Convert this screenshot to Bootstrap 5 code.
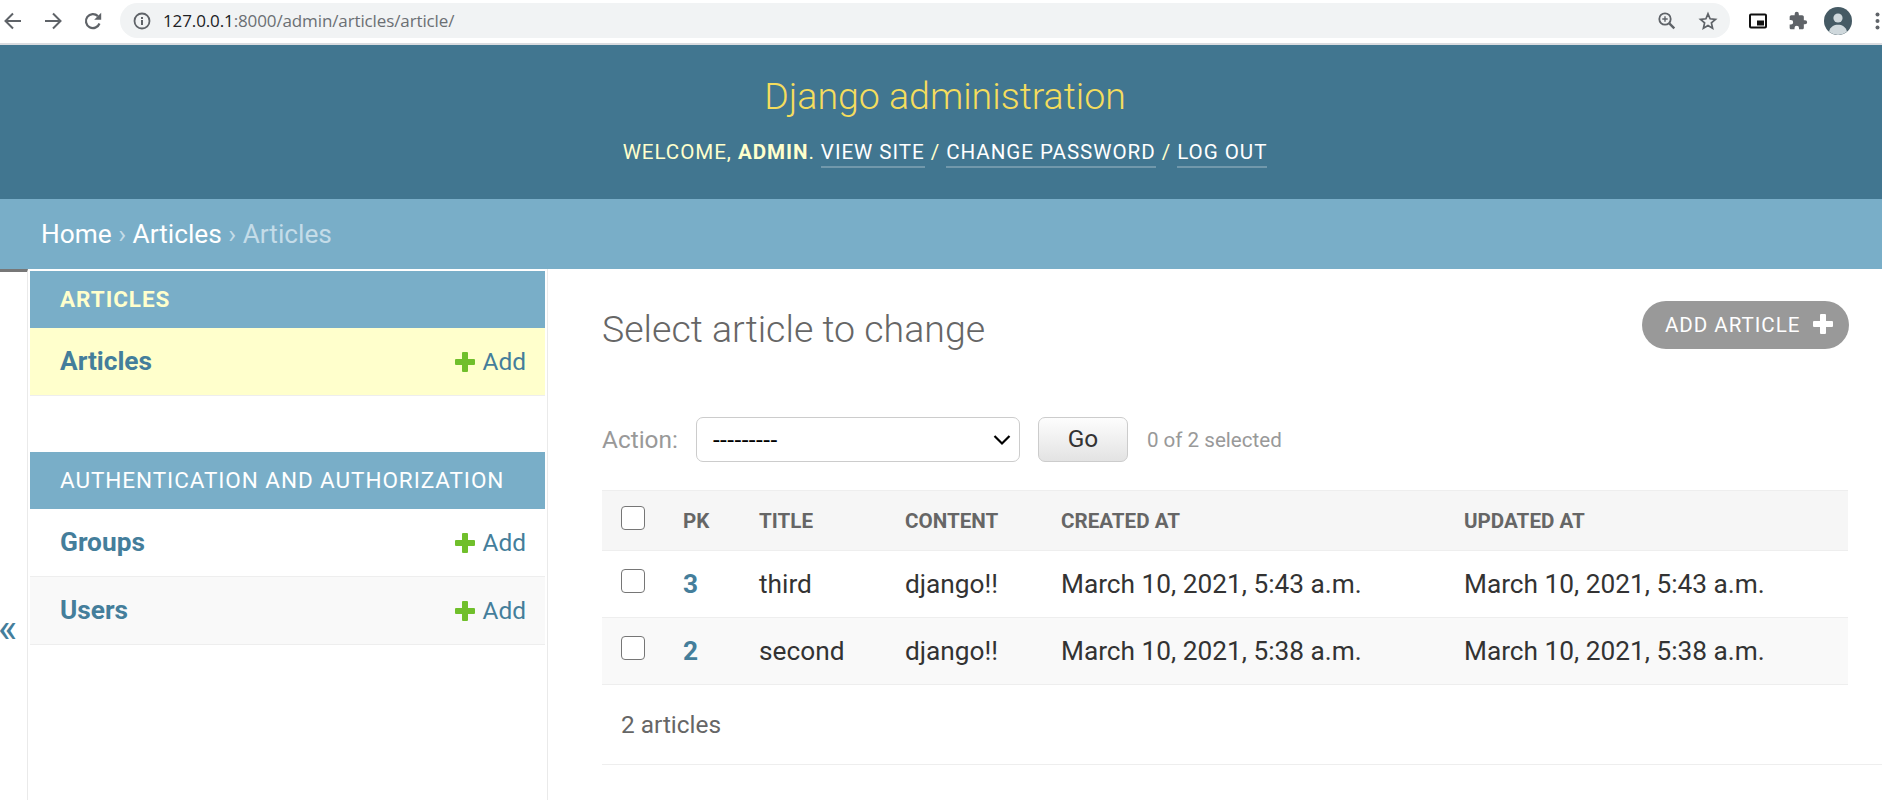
<!DOCTYPE html>
<html lang="en">
<head>
<meta charset="utf-8">
<meta name="viewport" content="width=device-width, initial-scale=1">
<title>Select article to change | Django site admin</title>
<link href="https://cdn.jsdelivr.net/npm/bootstrap@5.3.0/dist/css/bootstrap.min.css" rel="stylesheet">
<style>
html,body{height:800px;overflow:hidden}
body{font-family:Roboto,"Liberation Sans",sans-serif;font-size:26.25px;line-height:1.2;color:#333;background:#fff}
a{color:#447e9b;text-decoration:none}
.browser-bar{height:45px;border-bottom:2px solid #dadce0;padding-bottom:2px}
.browser-bar svg{display:block;flex:none}
.omnibox{margin-left:14px;width:1610px;height:35px;border-radius:18px;background:#f1f3f4;padding:0 12px 0 13px}
.url{font-family:"Open Sans","Noto Sans",sans-serif;font-size:17px;line-height:24px;letter-spacing:-.12px;color:#6b6f73;margin-left:12px;white-space:nowrap}
.url b{font-weight:400;color:#202124}
.site-header{height:154px;background:#417690;color:#ffc;padding-left:8px}
.site-header h1{font-size:37.5px;font-weight:300;line-height:44px;color:#f5dd5d;margin:29px 0 0}
.user-tools{font-size:20.6px;line-height:24px;letter-spacing:.94px;margin-top:22px;white-space:nowrap}
.user-tools a{color:#fff;border-bottom:2px solid #7198ab;padding-bottom:2px}
.crumbs{height:70px;background:#79aec8;color:#c4dce8;padding:2px 0 0 41px;white-space:nowrap}
.crumbs a{color:#fff}
.toggle-nav{width:28px;border-top:3px solid #777;border-right:1px solid #eaeaea;color:#447e9b;font-size:41px;line-height:44px;padding-top:334px;text-indent:-2px}
.side{width:520px;border-right:1px solid #eaeaea;padding:2px 2px 0}
.app-head{height:57px;background:#79aec8;color:#fff;font-size:22.5px;letter-spacing:.94px;padding-left:30px;white-space:nowrap}
.app-head.current{color:#ffc;font-weight:700}
.app-row{height:68px;border-bottom:1px solid #eee;padding:0 19px 0 30px}
.app-row .model{font-weight:700}
.app-row .adder{font-size:24.4px}
.app-row svg{margin-right:8px}
.current-row{background:#ffc}
.alt{background:#f9f9f9}
.gap-module{height:56px}
.content-main{padding:0 0 0 54px}
.content-main h2{font-size:37.5px;font-weight:300;line-height:44px;color:#666;margin:6px 0 0}
.title-row{height:148px;padding:32px 33px 0 0}
.add-link{width:207px;height:48px;border-radius:24px;background:#999;color:#fff;font-size:20.6px;letter-spacing:.94px;padding:0 16px 0 23px;white-space:nowrap}
.add-link svg{margin-bottom:2px}
.actions{height:45px;color:#999;font-size:24.4px;white-space:nowrap}
.pick{width:324px;height:45px;border:1px solid #ccc;border-radius:7px;color:#000;padding:0 8px 0 16px;margin-left:18px}
.pick span{letter-spacing:.45px}
.go{width:90px;height:45px;border:1px solid #ccc;border-radius:7px;color:#333;font-size:24.4px;line-height:1;padding:0;margin:0 19px 0 18px;background:linear-gradient(#fdfdfd,#e3e3e3)}
.counter{font-size:20.6px;padding-top:1px}
.results{width:1246px;table-layout:fixed;margin:28px 0 0;border-top:1px solid #eee;color:#333}
.results th,.results td{padding:2px 0 0 15px;border-bottom:1px solid #eee;vertical-align:middle;white-space:nowrap;text-align:left}
.results thead th{height:60px;background:#f6f6f6;color:#666;font-size:20.6px;font-weight:700}
.results tbody td{height:67px}
.c-check{width:66px}.c-pk{width:76px}.c-title{width:146px}.c-content{width:156px}.c-created{width:403px}.c-updated{width:399px}
.box{display:block;width:24px;height:24px;border:1.5px solid #767676;border-radius:4px;background:#fff;margin:0 0 8px 4px}
.total{height:80px;border-bottom:1px solid #eee;color:#666;font-size:24.4px;padding-left:19px}
</style>
</head>
<body class="d-flex flex-column">
<nav class="browser-bar d-flex align-items-center flex-shrink-0">
  <svg width="20" height="20" viewBox="0 0 20 20" fill="none" stroke="#5f6368" stroke-width="2" style="margin-left:3px"><path d="M18 10H3M10 2.500L2.500 10l7.500 7.500"/></svg>
  <svg width="20" height="20" viewBox="0 0 20 20" fill="none" stroke="#5f6368" stroke-width="2" style="margin-left:20px"><path d="M2 10h15M10 2.500l7.500 7.500-7.500 7.500"/></svg>
  <svg width="20" height="20" viewBox="0 0 20 20" style="margin-left:20px;margin-right:3px"><path d="M16.500 12.500a7 7 0 1 1-1.600-7.400" fill="none" stroke="#5f6368" stroke-width="2.200"/><path d="M18.200 1.800v7h-7z" fill="#5f6368"/></svg>
  <div class="omnibox d-flex align-items-center">
    <svg width="18" height="18" viewBox="0 0 18 18"><circle cx="9" cy="9" r="7.500" fill="none" stroke="#5f6368" stroke-width="1.800"/><path d="M8 8h2v5H8zM8 5h2v2H8z" fill="#5f6368"/></svg>
    <span class="url"><b>127.0.0.1</b>:8000/admin/articles/article/</span>
    <svg class="ms-auto" width="18" height="18" viewBox="0 0 18 18" fill="none" stroke="#5f6368"><circle cx="7" cy="7" r="5.700" stroke-width="1.800"/><path d="M11.300 11.300l5 5" stroke-width="2.400"/><path d="M7 4.300v5.400M4.300 7h5.400" stroke-width="1.400"/></svg>
    <svg width="20" height="20" viewBox="0 0 20 20" style="margin-left:22px" fill="none" stroke="#5f6368" stroke-width="1.700"><path d="M10 2.800l2.100 5 5.400.5-4.100 3.600 1.200 5.300L10 14.400l-4.600 2.800 1.200-5.300-4.100-3.600 5.400-.5z"/></svg>
  </div>
  <svg width="20" height="18" viewBox="0 0 20 18" style="margin-left:18px"><rect x="2" y="2.500" width="16" height="13" rx="1" fill="none" stroke="#111" stroke-width="2"/><path d="M9 8.500h7v5H9z" fill="#111"/></svg>
  <svg width="20" height="20" viewBox="0 0 24 24" style="margin-left:20px"><path fill="#5f6368" d="M20.500 11H19V7c0-1.100-.9-2-2-2h-4V3.500a2.500 2.500 0 0 0-5 0V5H4c-1.100 0-2 .9-2 2v3.800h1.500a2.700 2.700 0 0 1 0 5.400H2V20c0 1.100.9 2 2 2h3.800v-1.500a2.700 2.700 0 0 1 5.400 0V22H17c1.100 0 2-.9 2-2v-4h1.500a2.500 2.500 0 0 0 0-5z"/></svg>
  <svg width="28" height="28" viewBox="0 0 28 28" style="margin-left:16px"><circle cx="14" cy="14" r="14" fill="#455a64"/><circle cx="14" cy="11" r="4.600" fill="#cfd8dc"/><path d="M5 24.600C6.500 19.500 10 17.800 14 17.800s7.500 1.700 9 6.800A14 14 0 0 1 5 24.600z" fill="#cfd8dc"/></svg>
  <svg width="5" height="18" viewBox="0 0 5 18" fill="#5f6368" style="margin-left:23px"><circle cx="2.500" cy="2.500" r="2"/><circle cx="2.500" cy="9" r="2"/><circle cx="2.500" cy="15.500" r="2"/></svg>
</nav>
<header class="site-header text-center flex-shrink-0 overflow-hidden">
  <h1>Django administration</h1>
  <div class="user-tools">WELCOME, <strong>ADMIN</strong>. <a href="#">VIEW SITE</a> / <a href="#">CHANGE PASSWORD</a> / <a href="#">LOG OUT</a></div>
</header>
<div class="crumbs d-flex align-items-center flex-shrink-0"><span><a href="#">Home</a> › <a href="#">Articles</a> › Articles</span></div>
<div class="d-flex flex-grow-1 overflow-hidden">
  <div class="toggle-nav flex-shrink-0">«</div>
  <aside class="side flex-shrink-0">
    <div class="app-head current d-flex align-items-center">ARTICLES</div>
    <div class="app-row current-row d-flex align-items-center"><a class="model me-auto" href="#">Articles</a><svg width="20" height="20" viewBox="0 0 20 20" fill="#70bf2b"><path d="M8 0h4q1 0 1 1v6h6q1 0 1 1v4q0 1-1 1h-6v6q0 1-1 1H8q-1 0-1-1v-6H1q-1 0-1-1V8q0-1 1-1h6V1q0-1 1-1z"/></svg><a class="adder" href="#">Add</a></div>
    <div class="gap-module"></div>
    <div class="app-head d-flex align-items-center">AUTHENTICATION AND AUTHORIZATION</div>
    <div class="app-row d-flex align-items-center"><a class="model me-auto" href="#">Groups</a><svg width="20" height="20" viewBox="0 0 20 20" fill="#70bf2b"><path d="M8 0h4q1 0 1 1v6h6q1 0 1 1v4q0 1-1 1h-6v6q0 1-1 1H8q-1 0-1-1v-6H1q-1 0-1-1V8q0-1 1-1h6V1q0-1 1-1z"/></svg><a class="adder" href="#">Add</a></div>
    <div class="app-row alt d-flex align-items-center"><a class="model me-auto" href="#">Users</a><svg width="20" height="20" viewBox="0 0 20 20" fill="#70bf2b"><path d="M8 0h4q1 0 1 1v6h6q1 0 1 1v4q0 1-1 1h-6v6q0 1-1 1H8q-1 0-1-1v-6H1q-1 0-1-1V8q0-1 1-1h6V1q0-1 1-1z"/></svg><a class="adder" href="#">Add</a></div>
  </aside>
  <main class="content-main flex-grow-1">
    <div class="title-row d-flex justify-content-between align-items-start">
      <h2>Select article to change</h2>
      <a class="add-link d-flex align-items-center justify-content-between" href="#"><span>ADD ARTICLE</span><svg width="20" height="20" viewBox="0 0 20 20" fill="#fff"><path d="M8 0h4q1 0 1 1v6h6q1 0 1 1v4q0 1-1 1h-6v6q0 1-1 1H8q-1 0-1-1v-6H1q-1 0-1-1V8q0-1 1-1h6V1q0-1 1-1z"/></svg></a>
    </div>
    <div class="actions d-flex align-items-center">
      <span>Action:</span>
      <div class="pick d-flex align-items-center justify-content-between"><span>---------</span><svg width="18" height="12" viewBox="0 0 18 12" fill="none" stroke="#000" stroke-width="2.200"><path d="M1.500 2L9 9.500 16.500 2"/></svg></div>
      <button class="go" type="button">Go</button>
      <span class="counter">0 of 2 selected</span>
    </div>
    <table class="results">
      <colgroup><col class="c-check"><col class="c-pk"><col class="c-title"><col class="c-content"><col class="c-created"><col class="c-updated"></colgroup>
      <thead><tr><th><span class="box"></span></th><th>PK</th><th>TITLE</th><th>CONTENT</th><th>CREATED AT</th><th>UPDATED AT</th></tr></thead>
      <tbody>
        <tr><td><span class="box"></span></td><td><a href="#"><b>3</b></a></td><td>third</td><td>django!!</td><td>March 10, 2021, 5:43 a.m.</td><td>March 10, 2021, 5:43 a.m.</td></tr>
        <tr class="alt"><td><span class="box"></span></td><td><a href="#"><b>2</b></a></td><td>second</td><td>django!!</td><td>March 10, 2021, 5:38 a.m.</td><td>March 10, 2021, 5:38 a.m.</td></tr>
      </tbody>
    </table>
    <div class="total d-flex align-items-center">2 articles</div>
  </main>
</div>
<script src="https://cdn.jsdelivr.net/npm/bootstrap@5.3.0/dist/js/bootstrap.bundle.min.js"></script>
</body>
</html>
